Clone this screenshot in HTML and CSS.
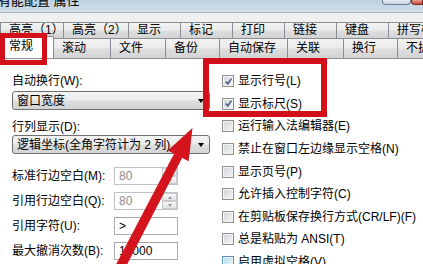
FILE: index.html
```html
<!DOCTYPE html>
<html lang="zh-CN">
<head>
<meta charset="utf-8">
<title>配置属性</title>
<link rel="stylesheet" href="styles.css">
</head>
<body>
<div class="win">
  <div class="titlebar">
    <span class="title">有能配置 属性</span>
    <div class="winbtns"><span class="wbtn"></span><span class="wbtn close"></span></div>
  </div>
  <div class="frame">
    <div class="tabs">
      <div class="tabrow row1">
        <span class="tab w63">高亮（1）</span>
        <span class="tab w65">高亮（2）</span>
        <span class="tab w52">显示</span>
        <span class="tab w52">标记</span>
        <span class="tab w52">打印</span>
        <span class="tab w52">链接</span>
        <span class="tab w52">键盘</span>
        <span class="tab w64">拼写检查</span>
      </div>
      <div class="tabrow row2">
        <span class="tab sel w53">常规</span>
        <span class="tab w57">滚动</span>
        <span class="tab w55">文件</span>
        <span class="tab w54">备份</span>
        <span class="tab w68">自动保存</span>
        <span class="tab w56">关联</span>
        <span class="tab w54">换行</span>
        <span class="tab w64">不扩展</span>
      </div>
    </div>
    <div class="page">
      <div class="leftcol">
        <div class="label">自动换行(W):</div>
        <div class="select s1"><span>窗口宽度</span><i class="caret"></i></div>
        <div class="label l2">行列显示(D):</div>
        <div class="select s2"><span>逻辑坐标(全角字符计为 2 列)</span><i class="caret"></i></div>
        <div class="fields">
          <div class="field"><span class="flabel">标准行边空白(M):</span><div class="input dis"><span>80</span><div class="spin"><b class="up"></b><b class="down"></b></div></div></div>
          <div class="field"><span class="flabel">引用行边空白(Q):</span><div class="input dis"><span>80</span><div class="spin"><b class="up"></b><b class="down"></b></div></div></div>
          <div class="field"><span class="flabel">引用字符(U):</span><div class="input"><span>&gt;</span></div></div>
          <div class="field"><span class="flabel">最大撤消次数(B):</span><div class="input"><span>10000</span></div></div>
        </div>
      </div>
      <div class="rightcol">
        <div class="cb on"><i class="box"><svg viewBox="0 0 10 10"><path d="M2 5 L4.2 7.6 L8.3 1.8" /></svg></i><span>显示行号(L)</span></div>
        <div class="cb on"><i class="box"><svg viewBox="0 0 10 10"><path d="M2 5 L4.2 7.6 L8.3 1.8" /></svg></i><span>显示标尺(S)</span></div>
        <div class="cb"><i class="box"></i><span>运行输入法编辑器(E)</span></div>
        <div class="cb"><i class="box"></i><span>禁止在窗口左边缘显示空格(N)</span></div>
        <div class="cb"><i class="box"></i><span>显示页号(P)</span></div>
        <div class="cb"><i class="box"></i><span>允许插入控制字符(C)</span></div>
        <div class="cb"><i class="box"></i><span>在剪贴板保存换行方式(CR/LF)(F)</span></div>
        <div class="cb"><i class="box"></i><span>总是粘贴为 ANSI(T)</span></div>
        <div class="cb hover"><i class="box"></i><span>启用虚拟空格(V)</span></div>
      </div>
    </div>
  </div>
  <div class="mark mark-tab"></div>
  <div class="mark mark-cb"></div>
  <svg class="arrow" viewBox="0 0 423 264" width="423" height="264">
    <polygon points="174.2,153.5 182.2,157.7 120.6,277.1 111.6,272.9"/>
    <polygon points="192.5,128 167.8,150.5 188.6,161.3"/>
  </svg>
</div>
</body>
</html>
```

FILE: styles.css
```css
* { box-sizing: border-box; }
body {
  margin: 0;
  width: 423px;
  height: 264px;
  overflow: hidden;
  background: #fff;
  font-family: "Liberation Sans", "Noto Sans CJK SC", sans-serif;
  font-size: 12px;
  color: #000;
}
.win { position: relative; width: 423px; height: 264px; overflow: hidden; }

.titlebar {
  height: 13px;
  background: linear-gradient(#bfd0e2, #d3dfeb);
  display: flex;
  justify-content: space-between;
  overflow: hidden;
  border-bottom: 1px solid #a9b7c6;
}
.title { font-size: 13px; line-height: 14px; margin-top: -6px; margin-left: -2px; white-space: nowrap; }
.winbtns { display: flex; align-items: flex-start; }
.wbtn {
  width: 29px; height: 5px;
  border: 1px solid #6d7f95; border-top: 0;
  border-radius: 0 0 4px 4px;
  background: linear-gradient(#e6edf4, #c6d3e1);
}
.wbtn.close { width: 12px; margin-left: 0; border-color: #7a2a20; background: linear-gradient(#e8a493, #c74732); border-radius: 0 0 0 4px; }

.frame { background: #f0f0f0; padding-top: 9px; }

.tabs { display: flex; flex-direction: column; }
.tabrow { display: flex; white-space: nowrap; overflow: visible; }
.tab {
  flex: none;
  border: 1px solid #8b8e95;
  border-bottom: 0;
  margin-right: -1px;
  background: linear-gradient(#f3f3f3, #ebebeb 45%, #dedede 55%, #d3d3d3);
  padding-left: 8px;
  line-height: 16px;
  color: #000;
}
.row1 .tab { height: 16px; line-height: 15px; }
.row2 .tab { height: 20px; line-height: 19px; }
.row2 .tab.sel { background: #fff; height: 22px; margin-top: -2px; position: relative; }
.w52 { width: 53px; }
.w53 { width: 54px; }
.w54 { width: 55px; }
.w55 { width: 56px; }
.w56 { width: 57px; }
.w57 { width: 58px; }
.w63 { width: 64px; }
.w64 { width: 65px; }
.w65 { width: 66px; }
.w68 { width: 69px; }

.page {
  background: #fff;
  display: grid;
  grid-template-columns: 198px 1fr;
  column-gap: 12px;
  padding: 11px 0 0 12px;
  height: 206px;
  border-top: 1px solid #8b8e95;
}
.leftcol { padding-top: 4px; display: flex; flex-direction: column; }
.label { line-height: 14px; height: 14px; white-space: nowrap; }
.l2 { margin-top: 10px; }
.select {
  height: 19px;
  border: 1px solid #707070;
  border-radius: 3px;
  background: linear-gradient(#f4f4f4, #ececec 48%, #dedede 52%, #d4d4d4);
  display: flex;
  align-items: center;
  justify-content: space-between;
  padding: 0 5px 0 4px;
  line-height: 16px;
  white-space: nowrap;
}
.s1 { margin-top: 3px; }
.s2 { margin-top: 1px; }
.caret { width: 0; height: 0; border-left: 3.5px solid transparent; border-right: 3.5px solid transparent; border-top: 4px solid #000; }

.fields { display: flex; flex-direction: column; gap: 7px; margin-top: 13px; }
.field { display: flex; align-items: center; height: 18px; }
.flabel { width: 102px; white-space: nowrap; line-height: 14px; }
.input {
  width: 64px; height: 18px;
  border: 1px solid #abadb3;
  border-top-color: #a3a6ad;
  background: #fff;
  display: flex; align-items: center; justify-content: space-between;
  padding-left: 4px;
  line-height: 14px;
}
.input.dis { color: #8c8c8c; border-color: #c0c2c6; }
.spin { width: 15px; height: 16px; display: flex; flex-direction: column; }
.spin b {
  flex: 1;
  border: 1px solid #c9cbcf;
  background: linear-gradient(#f6f6f6, #e4e4e4);
  display: flex; align-items: center; justify-content: center;
}
.spin b::after { content: ""; border-left: 2.5px solid transparent; border-right: 2.5px solid transparent; }
.spin .up::after { border-bottom: 3px solid #9a9a9a; }
.spin .down::after { border-top: 3px solid #9a9a9a; }

.rightcol { display: flex; flex-direction: column; margin-top: 0; }
.cb { height: 22.6px; display: flex; align-items: center; gap: 4px; white-space: nowrap; line-height: 14px; }
.box {
  flex: none;
  width: 12px; height: 12px;
  border: 1px solid #8f8f8f;
  background: linear-gradient(135deg, #d2d4d8, #f4f4f4);
  box-shadow: inset 0 0 0 1px #f5f5f5;
  display: flex; align-items: center; justify-content: center;
}
.box svg { width: 9px; height: 9px; }
.box path { fill: none; stroke: #4a5d8c; stroke-width: 1.8; }
.cb.hover .box { border-color: #5a8ec0; background: linear-gradient(135deg, #b9dcf2, #e7f4fc); }

.mark { position: absolute; border: 5px solid #d3101a; }
.mark-tab { left: 0; top: 33px; width: 47px; height: 32px; }
.mark-cb { left: 203px; top: 58px; width: 124px; height: 59px; border-width: 6px; }
.arrow { position: absolute; left: 0; top: 0; }
.arrow polygon { fill: #d3141c; }
```
